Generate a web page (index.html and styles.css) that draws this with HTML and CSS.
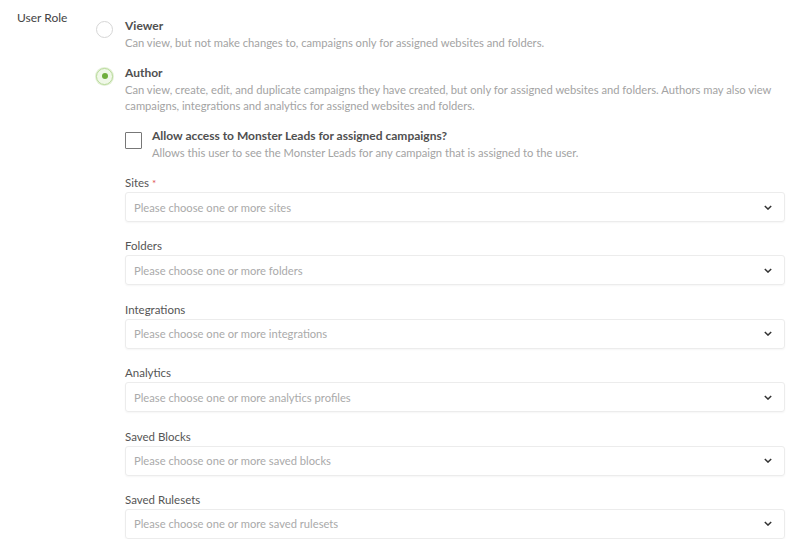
FILE: index.html
```html
<!DOCTYPE html>
<html>
<head>
<meta charset="utf-8">
<link rel="stylesheet" href="styles.css">
</head>
<body>
<div class="row">
  <div class="row-label">User Role</div>
  <div class="row-body">
    <div class="option">
      <span class="radio"></span>
      <div class="option-text">
        <div class="option-title">Viewer</div>
        <div class="option-desc">Can view, but not make changes to, campaigns only for assigned websites and folders.</div>
      </div>
    </div>
    <div class="option option-author">
      <span class="radio checked"></span>
      <div class="option-text">
        <div class="option-title">Author</div>
        <div class="option-desc">Can view, create, edit, and duplicate campaigns they have created, but only for assigned websites and folders. Authors may also view campaigns, integrations and analytics for assigned websites and folders.</div>
      </div>
    </div>
    <div class="sub">
      <div class="check-option">
        <span class="checkbox"></span>
        <div class="option-text">
          <div class="check-title">Allow access to Monster Leads for assigned campaigns?</div>
          <div class="option-desc">Allows this user to see the Monster Leads for any campaign that is assigned to the user.</div>
        </div>
      </div>
      <div class="field">
        <div class="field-label">Sites <span class="req">*</span></div>
        <div class="select"><span class="placeholder">Please choose one or more sites</span><svg class="chev" viewBox="0 0 10 6" width="8" height="5"><path d="M1 1l4 4 4-4" fill="none" stroke="#333" stroke-width="1.8"/></svg></div>
      </div>
      <div class="field">
        <div class="field-label">Folders</div>
        <div class="select"><span class="placeholder">Please choose one or more folders</span><svg class="chev" viewBox="0 0 10 6" width="8" height="5"><path d="M1 1l4 4 4-4" fill="none" stroke="#333" stroke-width="1.8"/></svg></div>
      </div>
      <div class="field">
        <div class="field-label">Integrations</div>
        <div class="select"><span class="placeholder">Please choose one or more integrations</span><svg class="chev" viewBox="0 0 10 6" width="8" height="5"><path d="M1 1l4 4 4-4" fill="none" stroke="#333" stroke-width="1.8"/></svg></div>
      </div>
      <div class="field">
        <div class="field-label">Analytics</div>
        <div class="select"><span class="placeholder">Please choose one or more analytics profiles</span><svg class="chev" viewBox="0 0 10 6" width="8" height="5"><path d="M1 1l4 4 4-4" fill="none" stroke="#333" stroke-width="1.8"/></svg></div>
      </div>
      <div class="field">
        <div class="field-label">Saved Blocks</div>
        <div class="select"><span class="placeholder">Please choose one or more saved blocks</span><svg class="chev" viewBox="0 0 10 6" width="8" height="5"><path d="M1 1l4 4 4-4" fill="none" stroke="#333" stroke-width="1.8"/></svg></div>
      </div>
      <div class="field">
        <div class="field-label">Saved Rulesets</div>
        <div class="select"><span class="placeholder">Please choose one or more saved rulesets</span><svg class="chev" viewBox="0 0 10 6" width="8" height="5"><path d="M1 1l4 4 4-4" fill="none" stroke="#333" stroke-width="1.8"/></svg></div>
      </div>
    </div>
  </div>
</div>
</body>
</html>
```

FILE: styles.css
```css
* { box-sizing: border-box; }
html, body { margin: 0; padding: 0; background: #fff; }
body {
  font-family: "Lato", "Liberation Sans", sans-serif;
  color: #444;
  font-size: 11.2px;
}
.row {
  display: flex;
  padding: 10px 15px 0 17px;
}
.row-label {
  width: 79px;
  flex: none;
  font-size: 12px;
  color: #444;
  line-height: 16px;
}
.row-body {
  flex: 1;
}
.option {
  display: flex;
  gap: 12px;
  margin-top: 8px;
}
.option-author {
  margin-top: 13px;
}
.radio {
  flex: none;
  width: 17px;
  height: 17px;
  border-radius: 50%;
  border: 1px solid #d6d6d6;
  margin-top: 3px;
  background: #fff;
  display: flex;
  align-items: center;
  justify-content: center;
}
.radio.checked {
  border-color: #b8da9a;
  background: #f0f8e8;
  box-shadow: 0 0 0 1px #e3f0d6;
}
.radio.checked::after {
  content: "";
  width: 6px;
  height: 6px;
  border-radius: 50%;
  background: #6fae3c;
}
.option-title {
  font-size: 12px;
  font-weight: bold;
  color: #505050;
  line-height: 16px;
}
.option-desc {
  font-size: 11.2px;
  color: #a3a3a3;
  line-height: 16.5px;
  margin-top: 1px;
}
.sub {
  padding-left: 29px;
}
.check-option {
  display: flex;
  gap: 10px;
  margin-top: 13px;
}
.checkbox {
  flex: none;
  width: 17px;
  height: 17px;
  border: 1.5px solid #777;
  border-radius: 1px;
  margin-top: 4px;
}
.check-title {
  font-size: 12px;
  font-weight: bold;
  color: #505050;
  line-height: 16px;
}
.field {
  margin-top: 16.4px;
}
.check-option + .field {
  margin-top: 14px;
}
.field-label {
  font-size: 11.5px;
  color: #555;
  line-height: 16px;
  margin-bottom: 1px;
}
.req { color: #e05050; font-size: 10px; vertical-align: top; }
.select {
  height: 30px;
  border: 1px solid #ececec;
  border-radius: 3px;
  box-shadow: 0 1px 2px rgba(0,0,0,0.04);
  display: flex;
  align-items: center;
  justify-content: space-between;
  padding: 0 12px 0 8px;
}
.placeholder {
  color: #aaa;
  font-size: 11.2px;
}
.chev { display: block; }
```
